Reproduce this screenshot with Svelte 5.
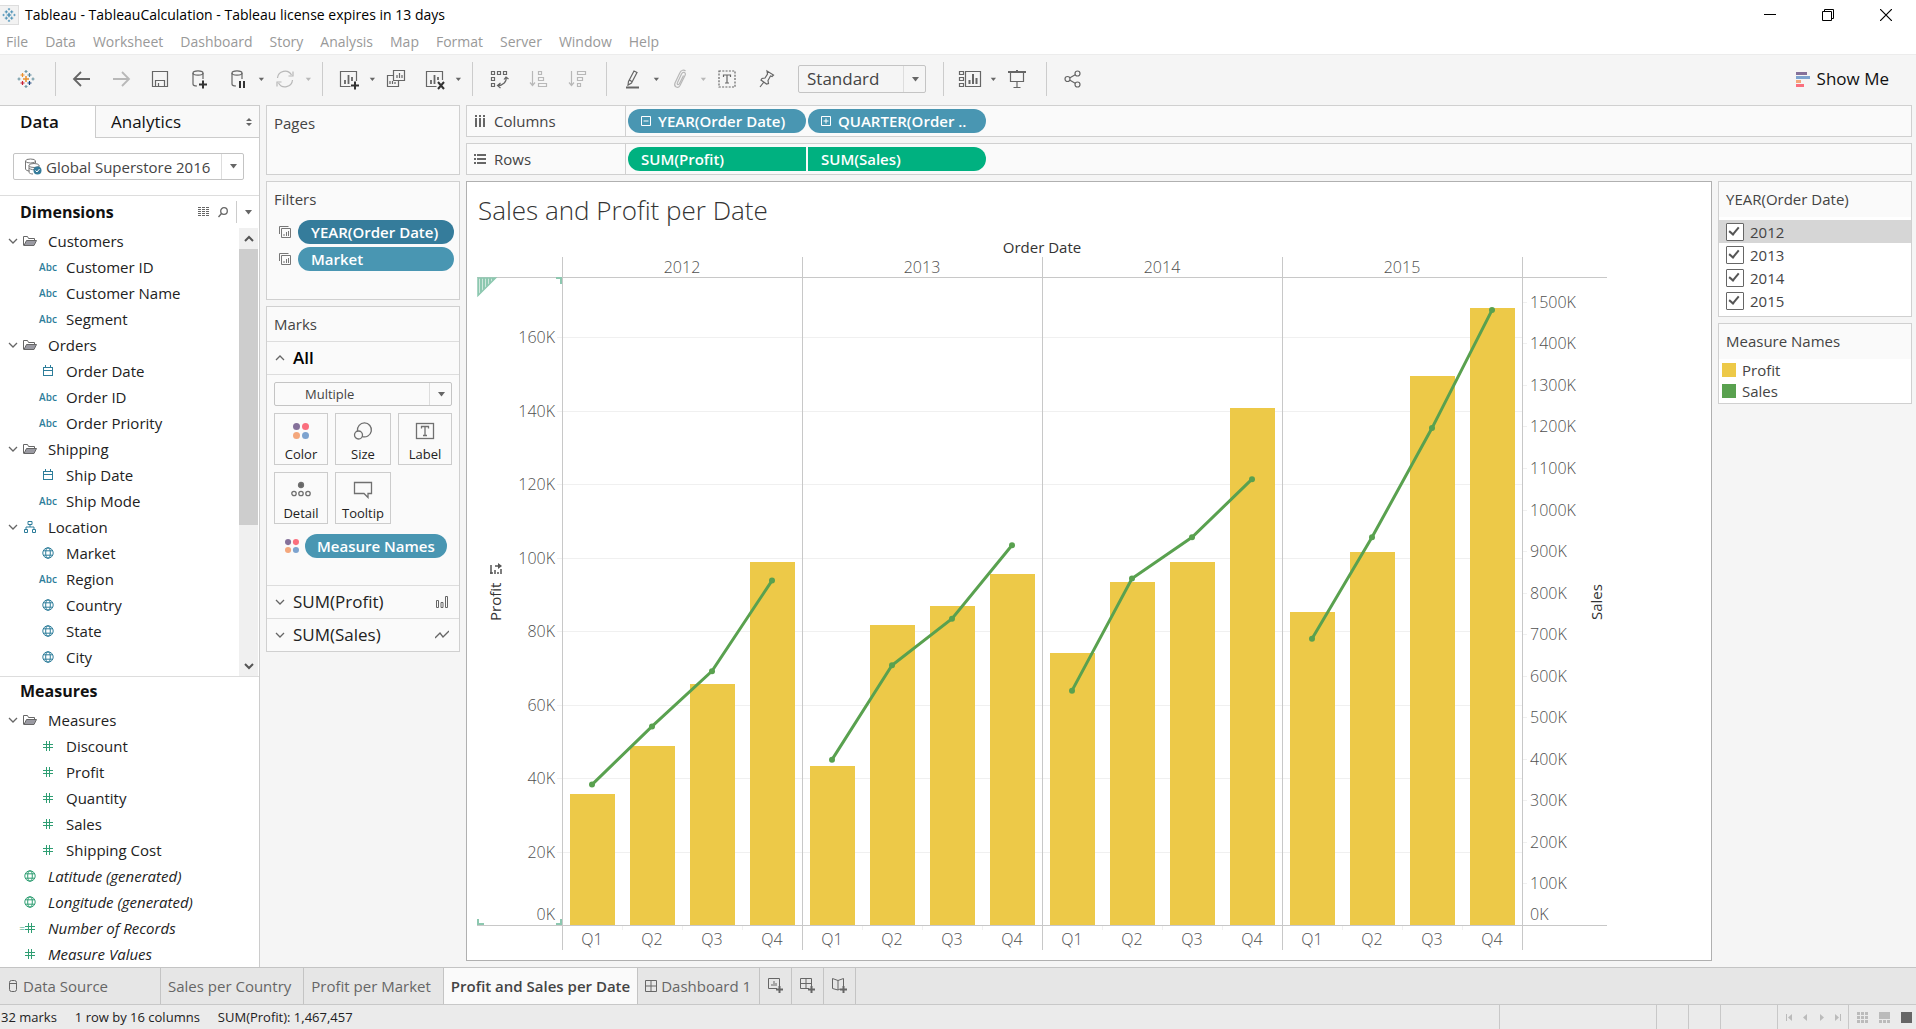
<script lang="ts">
	interface Field {
		name: string;
		icon: string;
		level: number;
		generated?: boolean;
	}

	const menus = [
		'File',
		'Data',
		'Worksheet',
		'Dashboard',
		'Story',
		'Analysis',
		'Map',
		'Format',
		'Server',
		'Window',
		'Help'
	];

	const dimensions: Field[] = [
		{ name: 'Customers', icon: 'folder', level: 0 },
		{ name: 'Customer ID', icon: 'abc', level: 1 },
		{ name: 'Customer Name', icon: 'abc', level: 1 },
		{ name: 'Segment', icon: 'abc', level: 1 },
		{ name: 'Orders', icon: 'folder', level: 0 },
		{ name: 'Order Date', icon: 'date', level: 1 },
		{ name: 'Order ID', icon: 'abc', level: 1 },
		{ name: 'Order Priority', icon: 'abc', level: 1 },
		{ name: 'Shipping', icon: 'folder', level: 0 },
		{ name: 'Ship Date', icon: 'date', level: 1 },
		{ name: 'Ship Mode', icon: 'abc', level: 1 },
		{ name: 'Location', icon: 'hierarchy', level: 0 },
		{ name: 'Market', icon: 'globe', level: 1 },
		{ name: 'Region', icon: 'abc', level: 1 },
		{ name: 'Country', icon: 'globe', level: 1 },
		{ name: 'State', icon: 'globe', level: 1 },
		{ name: 'City', icon: 'globe', level: 1 }
	];

	const measures: Field[] = [
		{ name: 'Measures', icon: 'folder', level: 0 },
		{ name: 'Discount', icon: 'number', level: 1 },
		{ name: 'Profit', icon: 'number', level: 1 },
		{ name: 'Quantity', icon: 'number', level: 1 },
		{ name: 'Sales', icon: 'number', level: 1 },
		{ name: 'Shipping Cost', icon: 'number', level: 1 },
		{ name: 'Latitude (generated)', icon: 'globe', level: 0, generated: true },
		{ name: 'Longitude (generated)', icon: 'globe', level: 0, generated: true },
		{ name: 'Number of Records', icon: 'calc', level: 0, generated: true },
		{ name: 'Measure Values', icon: 'number', level: 0, generated: true }
	];

	const markButtons = [
		{ name: 'Color', icon: 'color' },
		{ name: 'Size', icon: 'size' },
		{ name: 'Label', icon: 'label' },
		{ name: 'Detail', icon: 'detail' },
		{ name: 'Tooltip', icon: 'tooltip' }
	];

	// both measures in thousands, one entry per quarter
	const years = [
		{ year: 2012, profit: [35.7, 48.8, 65.6, 98.9], sales: [338, 478, 611, 829] },
		{ year: 2013, profit: [43.3, 81.6, 86.9, 95.6], sales: [398, 625, 737, 914] },
		{ year: 2014, profit: [74, 93.3, 98.9, 140.8], sales: [564, 834, 933, 1073] },
		{ year: 2015, profit: [85.3, 101.5, 149.4, 168], sales: [689, 933, 1196, 1480] }
	];

	const cell = 60;
	const pane = cell * 4;
	const left = 85;
	const right = left + pane * years.length;
	const top = 40;
	const bottom = 688;

	const profitY = (v: number) => bottom - v * 3.675;
	const salesY = (v: number) => bottom - v * 0.4155;
	const paneX = (i: number) => left + i * pane;

	const profitTicks = [0, 20, 40, 60, 80, 100, 120, 140, 160];
	const salesTicks = Array.from({ length: 16 }, (_, i) => i * 100);

	function linePoints(i: number) {
		return years[i].sales
			.map((v, q) => `${paneX(i) + q * cell + cell / 2},${salesY(v)}`)
			.join(' ');
	}

	let checked = $state([true, true, true, true]);
	let fit = $state('Standard');
	let markType = $state('Multiple');
</script>

{#snippet caret()}
	<svg class="caret" width="8" height="5" viewBox="0 0 8 5"><path d="M1 0h7L4.500 4.500z" fill="currentColor" /></svg>
{/snippet}

{#snippet chevron(d: string)}
	<svg class="chevron" width="10" height="10" viewBox="0 0 10 10" fill="none" stroke="#666" stroke-width="1.300"><path {d} /></svg>
{/snippet}

{#snippet fieldIcon(name: string)}
	{#if name === 'abc'}
		<span class="abc">Abc</span>
	{:else if name === 'folder'}
		<svg width="14" height="12" viewBox="0 0 14 12">
			<path d="M.5 10.500v-9h4l1 2h6v2" fill="none" stroke="#666" />
			<path d="M1 10.500 3.500 5.500h10l-2.500 5z" fill="#9a9aa2" stroke="#666" />
		</svg>
	{:else if name === 'date'}
		<svg width="12" height="12" viewBox="0 0 12 12" fill="none" stroke="currentColor">
			<rect x="1.500" y="2.500" width="9" height="8" /><path d="M1 5.500h10M3.500 0v3M8.500 0v3" />
		</svg>
	{:else if name === 'globe'}
		<svg width="12" height="12" viewBox="0 0 12 12" fill="none" stroke="currentColor">
			<circle cx="6" cy="6" r="5.200" /><ellipse cx="6" cy="6" rx="2.300" ry="5.200" />
			<path d="M1.500 3.800h9M1.500 8.200h9" />
		</svg>
	{:else if name === 'hierarchy'}
		<svg width="12" height="12" viewBox="0 0 12 12" fill="none" stroke="currentColor">
			<path d="M4 .5h4v3H4zM.5 8.500h3v3h-3zM8.500 8.500h3v3h-3zM6 3.500v2.500M2 8.500V6h8v2.500" />
		</svg>
	{:else}
		{#if name === 'calc'}<span class="equals">=</span>{/if}
		<svg width="10" height="10" viewBox="0 0 10 10" fill="none" stroke="currentColor">
			<path d="M3.500 0v10M6.500 0v10M0 3.500h10M0 6.500h10" />
		</svg>
	{/if}
{/snippet}

{#snippet fieldRow(f: Field)}
	<li class="field level-{f.level}" class:generated={f.generated}>
		<span class="expander">
			{#if f.level === 0 && !f.generated}{@render chevron('M1 3l4 4 4-4')}{/if}
		</span>
		<span class="field-icon">{@render fieldIcon(f.icon)}</span>
		<span>{f.name}</span>
	</li>
{/snippet}

{#snippet logo(size: number, colors: string[])}
	<svg width={size} height={size} viewBox="0 0 18 18" fill="none" stroke-width="1.200">
		<path d="M9 6v6M6 9h6" stroke={colors[0]} stroke-width="1.500" />
		<path d="M5.500 3v4M3.500 5h4" stroke={colors[1]} />
		<path d="M12.500 3v4M10.500 5h4" stroke={colors[2]} />
		<path d="M5.500 11v4M3.500 13h4" stroke={colors[3]} />
		<path d="M12.500 11v4M10.500 13h4" stroke={colors[4]} />
		<path d="M9 0v3M7.500 1.500h3M2 7.500v3M.5 9h3M16 7.500v3M14.500 9h3M9 15v3M7.500 16.500h3" stroke={colors[5]} />
	</svg>
{/snippet}

{#snippet toolIcon(name: string)}
	<svg width="24" height="24" viewBox="0 0 24 24" fill="none" stroke="currentColor" stroke-width="1.200">
		{#if name === 'back'}
			<path d="M4 12h16M11 5l-7 7 7 7" stroke-width="1.800" />
		{:else if name === 'forward'}
			<path d="M4 12h16M13 5l7 7-7 7" stroke-width="1.800" />
		{:else if name === 'save'}
			<path d="M4.500 4.500h15v15h-15zM7.500 19.500v-6h9v6M10.500 16v3" />
		{:else if name === 'add-data'}
			<ellipse cx="11" cy="6" rx="5" ry="2.200" /><path d="M6 6v11c0 1 1.500 2 4 2M16 6v6" />
			<path d="M12 17.500h8M16 13.500v8" stroke="#333" stroke-width="2" />
		{:else if name === 'pause-data'}
			<ellipse cx="11" cy="6" rx="5" ry="2.200" /><path d="M6 6v11c0 1 1.500 2 4 2M16 6v6" />
			<path d="M14 14v7M18 14v7" stroke="#333" stroke-width="2" />
		{:else if name === 'refresh'}
			<path d="M4.500 11a7.500 7.500 0 0 1 14-3M19.500 13a7.500 7.500 0 0 1-14 3M20 4.500V9h-4.500M4 19.500V15h4.500" />
		{:else if name === 'new-sheet'}
			<path d="M19.500 14V4.500h-16v15h10" /><path d="M8 17v-4M11.500 17V8M15 14v-4" stroke-width="1.800" />
			<path d="M14 18.500h8M18 14.500v8" stroke="#333" stroke-width="2" />
		{:else if name === 'duplicate'}
			<path d="M9.500 3.500h11v10h-11zM9.500 8.500h-6v11h11v-6M13 11V8M15.500 11V6M18 11V8M6 17v-3M8.500 17v-3M11 17v-2" />
		{:else if name === 'clear-sheet'}
			<path d="M19.500 13V4.500h-16v15h10" /><path d="M8 17v-4M11.500 17V8M15 13v-3" stroke-width="1.800" />
			<path d="M15 15l6 7M21 15l-6 7" stroke="#333" stroke-width="2" />
		{:else if name === 'swap'}
			<path d="M4.500 4.500h3v3h-3zM10.500 4.500h3v3h-3zM16.500 4.500h3v3h-3zM4.500 10.500h3v3h-3zM4.500 16.500h3v3h-3z" />
			<path d="M19 10.500c1 4-3 8-8 8M17 12.500l2-2.500 2.500 2M13.500 16l-3 2.500 3 2.500" />
		{:else if name === 'sort-asc'}
			<path d="M6.500 4v14M4 15.500l2.500 3 2.500-3M12.500 4.500h3v3h-3zM12.500 10.500h5v3h-5zM12.500 16.500h8v3h-8z" />
		{:else if name === 'sort-desc'}
			<path d="M6.500 4v14M4 15.500l2.500 3 2.500-3M12.500 4.500h8v3h-8zM12.500 10.500h5v3h-5zM12.500 16.500h3v3h-3z" />
		{:else if name === 'highlight'}
			<path d="M7.500 14.500l5.500-10.500 3 1.500-5.500 10.500-3.500 2zM8.500 13l3 2" /><path d="M5 20.500h13" stroke-width="2" />
		{:else if name === 'clip'}
			<path d="M15.500 8.500l-4 8c-1 2-3 1-2-1L13.500 7c1.500-3 5-1.500 3.500 1.500l-5 10c-2 3.500-6.500 1.500-5-2.500l5-10.500c1-2.500 4-3 5.500-1.500" />
		{:else if name === 'label-mode'}
			<path d="M4 4h16v16H4z" stroke-dasharray="2 1.300" /><path d="M8.500 10V8h7v2M12 8v8M10 16h4" />
		{:else if name === 'pin'}
			<path d="M13 4l6.500 4-1.500 1.500-1.500-.5-2.500 4.500.5 3-2 .5-5.500-4 1-1.500 3-.5L13.500 7zM9.500 15.500L6 20" />
		{:else if name === 'cards'}
			<path d="M1.500 4.500h4v3h-4zM1.500 10.500h4v3h-4zM1.500 16.500h4v3h-4zM7.500 4.500h15v15h-15z" />
			<path d="M11.500 17v-4M15 17V7M18.500 17v-6" stroke-width="2" />
		{:else if name === 'present'}
			<path d="M3 5h18M12 3v2" stroke-width="2" /><path d="M5.500 5v9.500h13V5M12 15v5M8.500 20.500h7" />
		{:else if name === 'share'}
			<circle cx="6.500" cy="12" r="2.500" /><circle cx="16.500" cy="6.500" r="2.500" /><circle cx="16.500" cy="17.500" r="2.500" />
			<path d="M9 10.800l5.200-3M9 13.200l5.200 3" />
		{/if}
	</svg>
{/snippet}

{#snippet tool(name: string, label: string, disabled = false)}
	<button class="tool" aria-label={label} {disabled}>{@render toolIcon(name)}</button>
{/snippet}

{#snippet splitTool(name: string, label: string, disabled = false)}
	<div class="split">
		{@render tool(name, label, disabled)}
		<button class="tool-menu" aria-label="{label} options" {disabled}>{@render caret()}</button>
	</div>
{/snippet}

{#snippet dots(size: number)}
	<svg width={size} height={size} viewBox="0 0 16 16">
		<circle cx="3.500" cy="3.500" r="3.500" fill="#85719a" /><circle cx="12.500" cy="3.500" r="3.500" fill="#fa6f7e" />
		<circle cx="3.500" cy="12.500" r="3.500" fill="#f4a77c" /><circle cx="12.500" cy="12.500" r="3.500" fill="#7da3cf" />
	</svg>
{/snippet}

{#snippet markIcon(name: string)}
	{#if name === 'color'}
		{@render dots(16)}
	{:else}
		<svg width="20" height="18" viewBox="0 0 20 18" fill="none" stroke="#707070" stroke-width="1.300">
			{#if name === 'size'}
				<path d="M4.500 9a7 7 0 1 1 4.500 5.500" /><circle cx="5.500" cy="13" r="4" />
			{:else if name === 'label'}
				<rect x="1.500" y="1.500" width="17" height="15" /><path d="M6.500 6.500v-2h7v2M10 4.500v9M8 13.500h4" />
			{:else if name === 'detail'}
				<circle cx="10" cy="4" r="2.500" fill="#666" /><circle cx="3" cy="12.500" r="2.200" />
				<circle cx="10" cy="12.500" r="2.200" /><circle cx="17" cy="12.500" r="2.200" />
			{:else}
				<path d="M1.500 1.500h17v11H15v4l-4-4H1.500z" />
			{/if}
		</svg>
	{/if}
{/snippet}

{#snippet sheetsIcon()}
	<svg width="12" height="12" viewBox="0 0 12 12" fill="none" stroke="#777">
		<path d="M.5 8V.5h9M2.500 2.500h9v9h-9zM5 10V8M7.500 10V6M9.500 10V5" />
	</svg>
{/snippet}

<div class="app">
	<header>
		<div class="titlebar">
			<span class="app-icon">{@render logo(14, ['#2f7ea8', '#3f8ab0', '#3f8ab0', '#3f8ab0', '#3f8ab0', '#5b9bbd'])}</span>
			<span class="window-title">Tableau - TableauCalculation - Tableau license expires in 13 days</span>
			<div class="window-buttons">
				<button aria-label="Minimize"><svg width="12" height="12" viewBox="0 0 12 12"><path d="M0 5.500h12" stroke="#000" /></svg></button>
				<button aria-label="Restore">
					<svg width="12" height="12" viewBox="0 0 12 12" fill="none" stroke="#000"><path d="M.5 2.500h9v9h-9zM2.500 2.500v-2h9v9h-2" /></svg>
				</button>
				<button aria-label="Close"><svg width="12" height="12" viewBox="0 0 12 12"><path d="M0 0l12 12M12 0L0 12" stroke="#000" stroke-width="1.200" /></svg></button>
			</div>
		</div>
		<nav class="menubar">
			{#each menus as menu}
				<button>{menu}</button>
			{/each}
		</nav>
		<div class="toolbar">
			<div class="group first">
				<button class="tool" aria-label="Start page">{@render logo(18, ['#eb912c', '#eb912c', '#5b879b', '#c72035', '#1f457e', '#7199a6'])}</button>
			</div>
			<div class="group">
				{@render tool('back', 'Undo')}
				{@render tool('forward', 'Redo', true)}
				{@render tool('save', 'Save')}
				{@render tool('add-data', 'New data source')}
				{@render splitTool('pause-data', 'Pause auto updates')}
				{@render splitTool('refresh', 'Run update', true)}
			</div>
			<div class="group">
				{@render splitTool('new-sheet', 'New worksheet')}
				{@render tool('duplicate', 'Duplicate')}
				{@render splitTool('clear-sheet', 'Clear sheet')}
			</div>
			<div class="group">
				{@render tool('swap', 'Swap rows and columns')}
				{@render tool('sort-asc', 'Sort ascending', true)}
				{@render tool('sort-desc', 'Sort descending', true)}
			</div>
			<div class="group">
				{@render splitTool('highlight', 'Highlight')}
				{@render splitTool('clip', 'Group members', true)}
				{@render tool('label-mode', 'Show mark labels')}
				{@render tool('pin', 'Fix axes')}
				<label class="combo fit">
					<select aria-label="Fit" bind:value={fit}><option>Standard</option></select>
					<span class="combo-arrow">{@render caret()}</span>
				</label>
			</div>
			<div class="group">
				{@render splitTool('cards', 'Show or hide cards')}
				{@render tool('present', 'Presentation mode')}
			</div>
			<div class="group last">
				{@render tool('share', 'Share')}
			</div>
			<button class="show-me">
				<svg width="14" height="15" viewBox="0 0 14 15">
					<path d="M0 0h11v3H0z" fill="#85719a" /><path d="M0 4h14v3H0z" fill="#7da3cf" />
					<path d="M0 8h5v3H0z" fill="#f4a77c" /><path d="M0 12h8v3H0z" fill="#fa6f7e" />
				</svg>
				Show Me
			</button>
		</div>
	</header>

	<main>
		<aside class="data-pane">
			<div class="pane-tabs">
				<button class="pane-tab active">Data</button>
				<button class="pane-tab">
					Analytics
					<svg width="6" height="8" viewBox="0 0 6 8" fill="#666"><path d="M0 3h6L3 0zM0 5h6L3 8z" /></svg>
				</button>
			</div>
			<div class="source">
				<label class="combo">
					<svg width="17" height="17" viewBox="0 0 17 17" fill="none" stroke="#777">
						<ellipse cx="5.500" cy="3" rx="5" ry="2" /><path d="M.5 3v8c0 1 2 2 4 2M10.500 3v2" />
						<ellipse cx="9" cy="7.500" rx="5" ry="2" /><path d="M4 7.500v7c1 1 2 1.500 4 1.500M14 7.500v2M4 10c2 2 5 2 7 1" />
						<circle cx="12.500" cy="12.500" r="4" fill="#357c9b" stroke="none" /><path d="M10.500 12.500l1.500 1.500 2.500-3" stroke="#fff" />
					</svg>
					<select aria-label="Data source"><option>Global Superstore 2016</option></select>
					<span class="combo-arrow">{@render caret()}</span>
				</label>
			</div>
			<div class="pane-heading">
				<h2>Dimensions</h2>
				<button aria-label="View data">
					<svg width="12" height="10" viewBox="0 0 12 10" stroke="#666" stroke-dasharray="3 1"><path d="M0 .5h12M0 2.500h12M0 4.500h12M0 6.500h12M0 8.500h12" /></svg>
				</button>
				<button aria-label="Find field">
					<svg width="10" height="11" viewBox="0 0 10 11" fill="none" stroke="#666" stroke-width="1.300"><circle cx="6" cy="4" r="3.300" /><path d="M3.500 6.500L.5 10" /></svg>
				</button>
				<button class="pane-menu" aria-label="Pane menu">{@render caret()}</button>
			</div>
			<div class="dimensions">
				<ul>
					{#each dimensions as f}
						{@render fieldRow(f)}
					{/each}
				</ul>
				<div class="scrollbar">
					<span class="scroll-end"><svg width="10" height="8" viewBox="0 0 10 8" fill="none" stroke="#555" stroke-width="2"><path d="M1 6l4-4 4 4" /></svg></span>
					<span class="thumb"></span>
					<span class="track"></span>
					<span class="scroll-end"><svg width="10" height="8" viewBox="0 0 10 8" fill="none" stroke="#555" stroke-width="2"><path d="M1 2l4 4 4-4" /></svg></span>
				</div>
			</div>
			<div class="measures">
				<h2>Measures</h2>
				<ul>
					{#each measures as f}
						{@render fieldRow(f)}
					{/each}
				</ul>
			</div>
		</aside>

		<aside class="cards">
			<section class="card pages"><h3>Pages</h3></section>
			<section class="card filters">
				<h3>Filters</h3>
				<div class="filter">{@render sheetsIcon()}<span class="pill dark">YEAR(Order Date)</span></div>
				<div class="filter">{@render sheetsIcon()}<span class="pill">Market</span></div>
			</section>
			<section class="card marks">
				<h3>Marks</h3>
				<button class="mark-layer all">{@render chevron('M1 7l4-4 4 4')}All</button>
				<div class="mark-body">
					<label class="combo mark-type">
						<select aria-label="Mark type" bind:value={markType}><option>Multiple</option></select>
						<span class="combo-arrow">{@render caret()}</span>
					</label>
					<div class="mark-buttons">
						{#each markButtons as b}
							<button><span class="mark-icon">{@render markIcon(b.icon)}</span>{b.name}</button>
						{/each}
					</div>
					<div class="encoding">{@render dots(14)}<span class="pill">Measure Names</span></div>
				</div>
				<button class="mark-layer">
					{@render chevron('M1 3l4 4 4-4')}SUM(Profit)
					<svg class="mark-kind" width="14" height="12" viewBox="0 0 14 12" fill="none" stroke="#666"><path d="M1.500 4.500h2v7h-2zM6 6.500h2v5H6zM10.500.5h2v11h-2z" /></svg>
				</button>
				<button class="mark-layer">
					{@render chevron('M1 3l4 4 4-4')}SUM(Sales)
					<svg class="mark-kind" width="14" height="10" viewBox="0 0 14 10" fill="none" stroke="#666" stroke-width="1.300"><path d="M0 8l5-5 3 4 6-6" /></svg>
				</button>
			</section>
		</aside>

		<div class="workspace">
			<div class="shelf">
				<div class="shelf-name">
					<svg width="12" height="12" viewBox="0 0 12 12" stroke="#666" stroke-width="2"><path d="M2 0v2M6 0v2M10 0v2M2 3v9M6 3v9M10 3v9" /></svg>
					Columns
				</div>
				<div class="pills">
					<span class="pill">
						<svg width="10" height="10" viewBox="0 0 10 10" fill="none" stroke="#fff"><path d="M.5.5h9v9h-9zM2.500 5h5" /></svg>
						YEAR(Order Date)
					</span>
					<span class="pill">
						<svg width="10" height="10" viewBox="0 0 10 10" fill="none" stroke="#fff"><path d="M.5.5h9v9h-9zM2.500 5h5M5 2.500v5" /></svg>
						QUARTER(Order ..
					</span>
				</div>
			</div>
			<div class="shelf">
				<div class="shelf-name">
					<svg width="12" height="12" viewBox="0 0 12 12" stroke="#666" stroke-width="2"><path d="M0 2h2M0 6h2M0 10h2M3 2h9M3 6h9M3 10h9" /></svg>
					Rows
				</div>
				<div class="pills joined">
					<span class="pill green">SUM(Profit)</span>
					<span class="pill green">SUM(Sales)</span>
				</div>
			</div>
			<div class="view-area">
				<section class="viz">
					<h1>Sales and Profit per Date</h1>
					<svg class="chart" width="1131" height="714" role="img" aria-label="Profit bars and sales lines per quarter">
						<defs>
							<pattern id="hatch" width="3" height="3" patternUnits="userSpaceOnUse">
								<path d="M0 0h3v3H0z" fill="#8dc8b0" /><path d="M2 0h1v3H2z" fill="#cfe7dc" />
							</pattern>
						</defs>

						<text class="title" x={(left + right) / 2} y="16" text-anchor="middle">Order Date</text>

						<g class="grid">
							{#each profitTicks.slice(1) as t}
								<path d="M{left - 5} {Math.round(profitY(t)) + 0.5}H{right}" />
							{/each}
							{#each salesTicks.slice(1) as t}
								<path d="M{right} {Math.round(salesY(t)) + 0.5}h5" />
							{/each}
							{#each years as _, i}
								{#each [1, 2, 3] as q}
									<path d="M{paneX(i) + q * cell + 0.5} {bottom}v5" />
								{/each}
							{/each}
						</g>

						{#each years as y, i}
							{#each y.profit as v, q}
								<rect class="bar" x={paneX(i) + q * cell + 8} y={Math.round(profitY(v))} width="45" height={bottom - Math.round(profitY(v))} />
							{/each}
						{/each}
						{#each years as y, i}
							<polyline class="line" points={linePoints(i)} />
							{#each y.sales as v, q}
								<circle class="dot" cx={paneX(i) + q * cell + cell / 2} cy={salesY(v)} r="3" />
							{/each}
						{/each}

						<g class="rule">
							<path d="M0 {top + 0.5}H1130M0 {bottom + 0.5}H1130" />
							{#each [0, 1, 2, 3, 4] as i}
								<path d="M{paneX(i) + 0.5} 20V713" />
							{/each}
						</g>

						{#each years as y, i}
							<text x={paneX(i) + pane / 2} y="36" text-anchor="middle">{y.year}</text>
							{#each y.profit as _, q}
								<text x={paneX(i) + q * cell + cell / 2} y="708" text-anchor="middle">Q{q + 1}</text>
							{/each}
						{/each}
						{#each profitTicks as t}
							<text x={left - 7} y={Math.min(profitY(t) + 6, bottom - 5)} text-anchor="end">{t}K</text>
						{/each}
						{#each salesTicks as t}
							<text x={right + 8} y={Math.min(salesY(t) + 6, bottom - 5)}>{t}K</text>
						{/each}

						<text class="title" transform="translate(24 384) rotate(-90)">Profit</text>
						<path d="M14 328v9M13 336h3M18 337v-4M21 337v-2M24 337v-5M18 329h5" fill="none" stroke="#555" stroke-width="1.500" />
						<path d="M21 326l4 3-4 3z" fill="#555" />
						<text class="title" transform="translate(1125 383) rotate(-90)">Sales</text>

						<path d="M1 41h17.500L1 58.500z" fill="url(#hatch)" stroke="#8dc8b0" stroke-width="1.500" />
						<path d="M79 41h5v6M1 682v5h6M79 687h5v-5" fill="none" stroke="#8dc8b0" stroke-width="2" />
					</svg>
				</section>

				<aside class="legends">
					<section class="card">
						<h3>YEAR(Order Date)</h3>
						<div class="checks">
							{#each years as y, i}
								<label class:selected={i === 0}><input type="checkbox" bind:checked={checked[i]} />{y.year}</label>
							{/each}
						</div>
					</section>
					<section class="card">
						<h3>Measure Names</h3>
						<ul class="legend">
							<li><span class="swatch profit"></span>Profit</li>
							<li><span class="swatch sales"></span>Sales</li>
						</ul>
					</section>
				</aside>
			</div>
		</div>
	</main>

	<nav class="sheets">
		<button class="sheet data-source">
			<svg width="8" height="12" viewBox="0 0 8 12" fill="none" stroke="#666"><rect x=".5" y=".5" width="7" height="11" rx="2" /><path d="M.5 3.500h7" /></svg>
			Data Source
		</button>
		<button class="sheet">Sales per Country</button>
		<button class="sheet">Profit per Market</button>
		<button class="sheet active">Profit and Sales per Date</button>
		<button class="sheet dashboard">
			<svg width="12" height="12" viewBox="0 0 12 12" fill="none" stroke="#666"><path d="M.5.5h11v11H.5zM6 .5v11M.5 6h11" /></svg>
			Dashboard 1
		</button>
		<button class="sheet new" aria-label="New worksheet">
			<svg width="16" height="16" viewBox="0 0 16 16" fill="none" stroke="#666"><path d="M11.500 8V.5H.5v10H9M4 8V6M6 8V3M8 8V5" /><path d="M8 11.500h7M11.500 8v7" stroke-width="2" /></svg>
		</button>
		<button class="sheet new" aria-label="New dashboard">
			<svg width="16" height="16" viewBox="0 0 16 16" fill="none" stroke="#666"><path d="M11.500 8V.5H.5v10H9M6 .5v10M.5 5.500h11" /><path d="M8 11.500h7M11.500 8v7" stroke-width="2" /></svg>
		</button>
		<button class="sheet new" aria-label="New story">
			<svg width="16" height="16" viewBox="0 0 16 16" fill="none" stroke="#666"><path d="M11.500 8V.5L6 2.500.5.5v10L6 12l2-1M6 2.500V12" /><path d="M8 11.500h7M11.500 8v7" stroke-width="2" /></svg>
		</button>
	</nav>

	<footer>
		<span>32 marks</span>
		<span>1 row by 16 columns</span>
		<span>SUM(Profit): 1,467,457</span>
		<div class="status-cells">
			<i class="wide"></i><i></i><i></i><i class="medium"></i>
			<div class="pager">
				<svg width="7" height="7" viewBox="0 0 7 7"><path d="M0 0h1v7H0zM6 0v7L2 3.500z" /></svg>
				<svg width="7" height="7" viewBox="0 0 7 7"><path d="M5 0v7L1 3.500z" /></svg>
				<svg width="7" height="7" viewBox="0 0 7 7"><path d="M2 0v7l4-3.500z" /></svg>
				<svg width="7" height="7" viewBox="0 0 7 7"><path d="M6 0h1v7H6zM1 0v7l4-3.500z" /></svg>
			</div>
			<div class="views">
				<svg width="11" height="11" viewBox="0 0 11 11"><path d="M0 0h3v3H0zM4 0h3v3H4zM8 0h3v3H8zM0 4h3v3H0zM4 4h3v3H4zM8 4h3v3H8zM0 8h3v3H0zM4 8h3v3H4zM8 8h3v3H8z" /></svg>
				<svg width="11" height="11" viewBox="0 0 11 11"><path d="M0 0h11v7H0zM0 8h3v3H0zM4 8h3v3H4zM8 8h3v3H8z" /></svg>
				<svg width="11" height="11" viewBox="0 0 11 11"><path d="M0 0h11v11H0z" fill="#666" /></svg>
			</div>
		</div>
	</footer>
</div>

<style>
	:global(body) {
		margin: 0;
	}

	.app {
		display: flex;
		flex-direction: column;
		min-height: 100vh;
		background: #f5f5f5;
		color: #222;
		font-family: 'Open Sans', 'Noto Sans', sans-serif;
		font-size: 15px;
		line-height: 20px;
	}

	.app :global(*) {
		box-sizing: border-box;
	}

	button,
	select {
		font: inherit;
		color: inherit;
		background: none;
		border: none;
		padding: 0;
		margin: 0;
	}

	button {
		display: flex;
		align-items: center;
		white-space: nowrap;
	}

	svg {
		display: block;
		flex: none;
	}

	h1,
	h2,
	h3,
	ul {
		margin: 0;
		padding: 0;
		font-weight: 400;
		list-style: none;
	}

	/* Title bar and menus */
	.titlebar {
		display: flex;
		align-items: center;
		height: 29px;
		background: #fff;
		color: #000;
		font-size: 14px;
	}

	.app-icon {
		padding: 2px;
		background: #f2f2f2;
		border: 1px solid #ddd;
		border-left: none;
	}

	.window-title {
		flex: 1;
		padding-left: 6px;
	}

	.window-buttons {
		display: flex;
		margin-right: 1px;
	}

	.window-buttons button {
		width: 58px;
		height: 28px;
		justify-content: center;
	}

	.menubar {
		display: flex;
		gap: 17px;
		height: 25px;
		padding: 1px 0 0 6px;
		background: #fff;
		color: #999;
		font-size: 14px;
	}

	/* Toolbar */
	.toolbar {
		display: flex;
		align-items: center;
		height: 51px;
		padding-bottom: 2px;
		border-top: 1px solid #ececec;
		color: #666;
	}

	.group {
		display: flex;
		align-items: center;
		gap: 15px;
		height: 34px;
		padding: 0 17px 0 14px;
		border-right: 1px solid #ccc;
	}

	.group.last {
		border-right: none;
	}

	.tool {
		width: 24px;
		height: 24px;
		justify-content: center;
	}

	.tool:disabled,
	.tool-menu:disabled {
		color: #b8b8b8;
	}

	.split {
		display: flex;
		align-items: center;
		gap: 6px;
		margin-right: -8px;
	}

	.tool-menu .caret {
		width: 6px;
		margin: 0 2px;
	}

	.show-me {
		gap: 7px;
		margin-left: auto;
		padding-right: 27px;
		color: #111;
		font-size: 17px;
	}

	.combo {
		display: flex;
		align-items: center;
		height: 26px;
		border: 1px solid #c4c4c4;
		border-radius: 2px;
		color: #444;
	}

	.combo select {
		flex: 1;
		min-width: 0;
		appearance: none;
	}

	.combo-arrow {
		display: flex;
		align-items: center;
		justify-content: center;
		align-self: stretch;
		width: 22px;
		border-left: 1px solid #ddd;
		color: #666;
	}

	.combo.fit {
		width: 128px;
		height: 28px;
		margin-left: 5px;
		padding-left: 8px;
		font-size: 17px;
	}

	main {
		display: flex;
		flex: 1;
		gap: 6px;
		padding-right: 4px;
	}

	/* Data pane */
	.data-pane {
		display: flex;
		flex-direction: column;
		flex: none;
		width: 260px;
		background: #fff;
		border: 1px solid #ccc;
		border-width: 1px 1px 0 0;
		color: #111;
	}

	.pane-tabs {
		display: flex;
		height: 32px;
		font-size: 17px;
	}

	.pane-tab {
		flex: 1;
		justify-content: space-between;
		padding: 0 7px 0 15px;
		background: #f9f9f9;
		border: 1px solid #ccc;
		border-width: 0 0 1px 1px;
	}

	.pane-tab.active {
		flex: none;
		width: 95px;
		padding-left: 20px;
		background: #fff;
		border: none;
		font-weight: 600;
	}

	.source {
		padding: 15px 15px 15px 13px;
		border-bottom: 1px solid #ddd;
	}

	.source .combo {
		height: 27px;
		gap: 4px;
		padding-left: 11px;
	}

	.pane-heading {
		display: flex;
		align-items: center;
		gap: 8px;
		height: 32px;
		padding-left: 20px;
	}

	h2 {
		flex: 1;
		font-size: 16px;
		font-weight: 700;
	}

	.pane-menu {
		width: 23px;
		height: 22px;
		justify-content: center;
		border-left: 1px solid #ccc;
		color: #666;
	}

	.dimensions {
		display: flex;
		flex: 1;
	}

	.dimensions ul {
		flex: 1;
	}

	.field {
		display: flex;
		align-items: center;
		height: 26px;
		padding-left: 8px;
		color: #222;
	}

	.field.generated {
		font-style: italic;
	}

	.expander {
		width: 10px;
	}

	.field-icon {
		display: flex;
		align-items: center;
		justify-content: center;
		width: 24px;
		margin-right: 6px;
		color: #2d7d9a;
	}

	.level-1 .field-icon {
		margin-left: 18px;
	}

	.measures .field-icon {
		color: #2f9e73;
	}

	.abc {
		font-size: 10px;
		font-weight: 600;
	}

	.equals {
		font-size: 10px;
		font-style: normal;
		margin-left: -6px;
	}

	.scrollbar {
		display: flex;
		flex-direction: column;
		width: 19px;
		margin-right: 1px;
		background: #f0f0f0;
	}

	.scroll-end {
		display: flex;
		align-items: center;
		justify-content: center;
		height: 21px;
	}

	.thumb {
		flex: 275;
		background: #cdcdcd;
	}

	.track {
		flex: 130;
	}

	.measures {
		border-top: 1px solid #ddd;
	}

	.measures h2 {
		padding: 4px 20px 6px;
	}

	/* Pages, filters and marks */
	.cards {
		display: flex;
		flex-direction: column;
		flex: none;
		gap: 6px;
		width: 194px;
	}

	.card {
		background: #fafafa;
		border: 1px solid #d0d0d0;
	}

	h3 {
		padding: 7px;
		color: #444;
		font-size: 15px;
	}

	.pages {
		height: 70px;
	}

	.filters {
		height: 119px;
	}

	.filters h3 {
		padding-bottom: 11px;
	}

	.filter {
		display: flex;
		align-items: center;
		gap: 7px;
		padding: 0 5px 3px 12px;
	}

	.pill {
		display: flex;
		align-items: center;
		flex: 1;
		gap: 7px;
		height: 24px;
		padding: 0 13px;
		border-radius: 12px;
		background: #4996b2;
		color: #fff;
		font-weight: 600;
		white-space: nowrap;
	}

	.pill.dark {
		background: #357c9b;
	}

	.pill.green {
		background: #00b180;
	}

	.mark-layer {
		width: 100%;
		height: 33px;
		gap: 8px;
		padding: 0 10px 0 8px;
		border-top: 1px solid #ddd;
		color: #222;
		font-size: 17px;
	}

	.mark-layer.all {
		color: #000;
		font-weight: 600;
	}

	.mark-kind {
		margin-left: auto;
	}

	.mark-body {
		padding: 7px;
		border-top: 1px solid #ddd;
	}

	.mark-type {
		height: 24px;
		margin-bottom: 7px;
		padding-left: 30px;
		font-size: 13px;
	}

	.mark-buttons {
		display: grid;
		grid-template-columns: 54px 56px 54px;
		gap: 7px;
	}

	.mark-buttons button {
		flex-direction: column;
		height: 52px;
		padding-top: 6px;
		border: 1px solid #ccc;
		font-size: 13px;
	}

	.mark-icon {
		display: flex;
		align-items: center;
		height: 22px;
		margin-bottom: 2px;
	}

	.encoding {
		display: flex;
		align-items: center;
		gap: 6px;
		padding: 10px 5px 20px 11px;
	}

	.encoding .pill {
		padding: 0 12px;
	}

	/* Shelves */
	.workspace {
		display: flex;
		flex: 1;
		flex-direction: column;
		gap: 6px;
		min-width: 0;
	}

	.shelf {
		display: flex;
		height: 32px;
		background: #fafafa;
		border: 1px solid #d0d0d0;
	}

	.shelf-name {
		display: flex;
		align-items: center;
		gap: 8px;
		width: 159px;
		padding-left: 7px;
		border-right: 1px solid #d0d0d0;
		color: #444;
	}

	.pills {
		display: flex;
		align-items: center;
		gap: 2px;
		padding-left: 2px;
	}

	.pills .pill {
		flex: none;
		width: 178px;
	}

	.joined .pill:first-child {
		border-radius: 12px 0 0 12px;
	}

	.joined .pill:last-child {
		border-radius: 0 12px 12px 0;
	}

	/* View */
	.view-area {
		display: flex;
		flex: 1;
		gap: 6px;
		padding-bottom: 6px;
	}

	.viz {
		flex: 1;
		min-width: 0;
		padding: 0 10px;
		background: #fff;
		border: 1px solid #b0b0b0;
	}

	h1 {
		padding: 12px 0 11px 1px;
		color: #333;
		font-size: 26px;
		font-weight: 300;
		line-height: 32px;
	}

	.chart text {
		fill: #505050;
		font-size: 16px;
		font-weight: 300;
	}

	.chart .title {
		fill: #333;
		font-size: 15px;
		font-weight: 400;
	}

	.grid path {
		stroke: #f0f0f0;
	}

	.rule path {
		stroke: #c8c8c8;
	}

	.bar {
		fill: #edc948;
	}

	.line {
		fill: none;
		stroke: #59a14f;
		stroke-width: 3;
	}

	.dot {
		fill: #59a14f;
	}

	.legends {
		display: flex;
		flex-direction: column;
		flex: none;
		gap: 6px;
		width: 194px;
	}

	.legends h3 {
		padding-bottom: 8px;
	}

	.checks {
		padding: 3px 0 4px;
		background: #fff;
	}

	.checks label {
		display: flex;
		align-items: center;
		gap: 6px;
		height: 23px;
		padding-left: 7px;
		color: #444;
	}

	.checks .selected {
		background: #d6d6d6;
	}

	.checks input {
		display: grid;
		place-items: center;
		appearance: none;
		width: 18px;
		height: 18px;
		margin: 0;
		background: #fff;
		border: 1px solid #666;
		border-radius: 1px;
	}

	.checks input:checked::after {
		content: '';
		width: 4px;
		height: 8px;
		margin: 0 2px 4px 0;
		border: solid #555;
		border-width: 0 2px 2px 0;
		transform: rotate(40deg);
	}

	.legend {
		padding: 0 3px 2px;
		background: #fff;
		color: #444;
	}

	.legend li {
		display: flex;
		align-items: center;
		gap: 6px;
		height: 21px;
	}

	.swatch {
		width: 14px;
		height: 14px;
	}

	.swatch.profit {
		background: #edc948;
	}

	.swatch.sales {
		background: #59a14f;
	}

	/* Sheet tabs and status bar */
	.sheets {
		display: flex;
		height: 37px;
		background: #e6e6e6;
		border-top: 1px solid #c4c4c4;
		color: #666;
	}

	.sheet {
		gap: 6px;
		padding: 0 12px 0 7px;
		border-right: 1px solid #c4c4c4;
	}

	.sheet.data-source {
		width: 161px;
		padding-left: 9px;
	}

	.sheet.active {
		padding: 0 7px;
		background: #fafafa;
		color: #444;
		font-weight: 600;
	}

	.sheet.dashboard {
		gap: 4px;
		padding-right: 8px;
	}

	.sheet.new {
		width: 32px;
		padding: 0;
		justify-content: center;
	}

	footer {
		display: flex;
		align-items: center;
		gap: 18px;
		height: 25px;
		padding-left: 1px;
		background: #ebebeb;
		border-top: 1px solid #c8c8c8;
		font-size: 13px;
	}

	.status-cells {
		display: flex;
		align-self: stretch;
		margin-left: auto;
	}

	.status-cells i {
		width: 32px;
		border-left: 1px solid #c8c8c8;
	}

	.status-cells .wide {
		width: 157px;
	}

	.status-cells .medium {
		width: 57px;
	}

	.pager,
	.views {
		display: flex;
		align-items: center;
		border-left: 1px solid #c8c8c8;
		fill: #bbb;
	}

	.pager {
		gap: 9px;
		width: 71px;
		padding-left: 8px;
	}

	.views {
		gap: 11px;
		width: 68px;
		padding-left: 8px;
	}
</style>
